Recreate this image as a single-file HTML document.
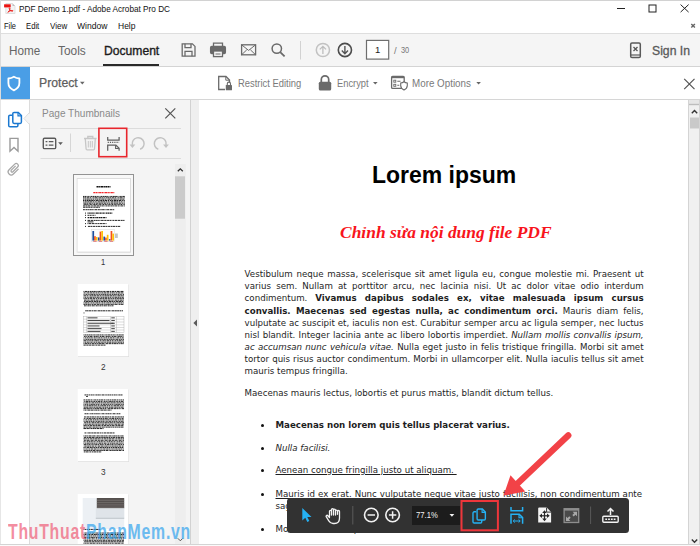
<!DOCTYPE html>
<html><head><meta charset="utf-8"><title>PDF Demo 1.pdf - Adobe Acrobat Pro DC</title>
<style>
*{box-sizing:border-box;margin:0;padding:0}
html,body{width:700px;height:546px;overflow:hidden;background:#fff}
body{position:relative;font-family:"Liberation Sans",sans-serif;color:#222}
.abs{position:absolute}
svg{position:absolute;overflow:visible}
.t{position:absolute;white-space:nowrap;transform-origin:0 50%;line-height:1}
#titlebar{left:0;top:0;width:700px;height:34px;background:#fff}
#tb1{left:0;top:33px;width:700px;height:34px;background:#f5f5f5;border-top:1px solid #dedede;border-bottom:1px solid #d4d4d4}
#tb2{left:0;top:67px;width:700px;height:33px;background:#fff;border-bottom:1px solid #d6d6d6}
#shield{left:0;top:67px;width:30px;height:32px;background:#4a9ee6}
#navstrip{left:0;top:100px;width:30px;height:446px;background:#fff;border-right:1px solid #dcdcdc;border-left:1px solid #e6e6e6}
#panel{left:30px;top:100px;width:160px;height:446px;background:#f4f4f4}
#divider{left:190px;top:100px;width:9px;height:446px;background:#efefef;border-left:1px solid #d2d2d2}
#docarea{left:199px;top:100px;width:490px;height:446px;background:#fff}
#vscroll{left:688px;top:100px;width:12px;height:446px;background:#f0f0f0;border-left:1px solid #d4d4d4;border-right:1px solid #d4d4d4}
.ui{color:#6e6e6e}
.doc{font-family:"DejaVu Sans",sans-serif;color:#1e1e1e;font-size:8.675px;line-height:12.1px}
</style></head><body>
<!-- title + menu -->
<div id="titlebar" class="abs"></div>
<svg style="left:0;top:0" width="20" height="17" viewBox="0 0 20 17"><path d="M5.800 3.500h6.700l2.500 2.500v7.500h-9.200z" fill="#f4f4f4" stroke="#d6d6d6" stroke-width=".7"/><path d="M12.500 3.500v2.500h2.500z" fill="#bdbdbd"/><rect x="4.100" y="4.300" width="6.600" height="3.100" fill="#ec1310"/><path d="M7.800 12.300c1.300-.8 2.200-2.400 2.200-3.900c0-.7-.9-.7-.8.200c.2 1.300 1.400 2.400 3.200 2.600c.8.100.8-.7 0-.7c-1.600 0-3.400.6-4.600 1.800z" fill="none" stroke="#ec1310" stroke-width=".9"/></svg>
<span class="t" id="t_title" style="left:18.800px;top:3.700px;font-size:9.600px;color:#111;transform:scaleX(0.8555)">PDF Demo 1.pdf - Adobe Acrobat Pro DC</span>
<span class="t" id="m1" style="left:4px;top:22px;font-size:9px;color:#111;transform:scaleX(0.8267)">File</span>
<span class="t" id="m2" style="left:26px;top:22px;font-size:9px;color:#111;transform:scaleX(0.8540)">Edit</span>
<span class="t" id="m3" style="left:49.500px;top:22px;font-size:9px;color:#111;transform:scaleX(0.8910)">View</span>
<span class="t" id="m4" style="left:77px;top:22px;font-size:9px;color:#111;transform:scaleX(0.9527)">Window</span>
<span class="t" id="m5" style="left:117.500px;top:22px;font-size:9px;color:#111;transform:scaleX(0.9451)">Help</span>
<!-- window controls -->
<svg style="left:610px;top:0" width="90" height="34" viewBox="0 0 90 34" fill="none" stroke="#222" stroke-width="1"><path d="M7 8.500h8"/><rect x="39" y="5" width="7" height="7"/><path d="M70.600 4.600l8 7.500M78.600 4.600l-8 7.500"/><path d="M81.300 24l3.600 3.600M84.900 24l-3.600 3.600" stroke="#666" stroke-width="1.400"/></svg>
<!-- toolbar 1 -->
<div id="tb1" class="abs"></div>
<span class="t ui" id="tab1" style="left:8.500px;top:45px;font-size:12px;color:#666;transform:scaleX(0.9761)">Home</span>
<span class="t ui" id="tab2" style="left:58px;top:45px;font-size:12px;color:#666;transform:scaleX(0.9905)">Tools</span>
<span class="t" id="tab3" style="left:103.500px;top:45px;font-size:12px;color:#1c1c1c;-webkit-text-stroke:.35px #1c1c1c;transform:scaleX(1.0100)">Document</span>
<div class="abs" style="left:103px;top:64px;width:56px;height:2px;background:#2a2a2a"></div>
<div id="tb1icons">
<svg style="left:0;top:34px" width="700" height="33" viewBox="0 34 700 33" fill="none" stroke="#6a6a6a" stroke-width="1.300">
<!-- save -->
<path d="M182.200 43.800h10.200l2.600 2.600v9.800h-12.800z"/><path d="M185 43.800v3.800h6v-3.800"/><path d="M185 56.200v-4.800h7v4.800"/>
<!-- print -->
<path d="M213.500 46.500v-3.400h9v3.400" /><rect x="210.600" y="46.500" width="14.800" height="7" rx="1.200" fill="#6a6a6a"/><rect x="213.500" y="51" width="9" height="5.600" fill="#f5f5f5"/><path d="M215.500 54h5" stroke-width="1"/>
<!-- mail -->
<rect x="241.600" y="44.800" width="14" height="10"/><path d="M241.600 44.800l7 5.600l7-5.600M241.600 54.800l5.200-5M255.600 54.800l-5.200-5" stroke-width="1"/>
<!-- search -->
<circle cx="276.800" cy="48.600" r="4.700" stroke-width="1.500"/><path d="M280.200 52.200l4.400 4.200" stroke-width="1.800"/>
<!-- sep -->
<path d="M300.500 41v18.500" stroke="#d2d2d2" stroke-width="1"/>
<!-- up/down -->
<circle cx="322.900" cy="50" r="6.600" stroke="#c2c2c2" stroke-width="1.500"/><path d="M322.900 54v-7.500M319.800 49.400l3.100-3.100l3.100 3.100" stroke="#bdbdbd" stroke-width="1.300"/>
<circle cx="344.900" cy="50" r="6.600" stroke="#4c4c4c" stroke-width="1.600"/><path d="M344.900 46v7.500M341.800 50.600l3.100 3.100l3.100-3.100" stroke="#555" stroke-width="1.400"/>
<!-- page box -->
<rect x="366.500" y="40.400" width="22.200" height="18.700" fill="#fff" stroke="#6e6e6e" stroke-width="1.200"/>
<!-- mobile -->
<rect x="630.700" y="42.900" width="9.600" height="14.600" rx="1.300" stroke="#5a5a5a" stroke-width="1.500"/><path d="M633.500 47l4 4M637.500 47l-4 4" stroke="#555" stroke-width="1.300"/><path d="M631 55h9" stroke="#5a5a5a" stroke-width="1.200"/>
</svg>
<span class="t" id="pgnum" style="left:375px;top:45px;font-size:9.500px;color:#222">1</span>
<span class="t ui" id="pgslash" style="left:394px;top:45.700px;font-size:9.500px;color:#777">/</span><span class="t ui" id="pgtot" style="left:401.300px;top:46px;font-size:9px;color:#777;transform:scaleX(.82)">30</span>
<span class="t" id="signin" style="left:652px;top:45px;font-size:12.200px;color:#5a5a5a;-webkit-text-stroke:.3px #5a5a5a;transform:scaleX(1.0012)">Sign In</span>
</div>
<!-- toolbar 2 -->
<div id="tb2" class="abs"></div>
<div id="shield" class="abs"></div>
<div id="tb2icons">
<svg style="left:0;top:67px" width="700" height="33" viewBox="0 67 700 33" fill="none" stroke="#6a6a6a" stroke-width="1.300">
<!-- shield -->
<path d="M13.900 76.700c-1.900 1.200-3.700 1.700-5.500 1.800v4.600c0 3.300 2.200 5.800 5.500 7.200c3.300-1.400 5.500-3.900 5.500-7.200v-4.600c-1.800-.1-3.600-.6-5.500-1.800z" stroke="#fff" stroke-width="1.800" stroke-linejoin="round"/>
<!-- protect arrow -->
<path d="M80 81.800h4.600l-2.300 2.600z" fill="#666" stroke="none"/>
<!-- restrict icon -->
<path d="M225 89.500h-6.300v-13h7.300l3.500 3.500v2.500"/><path d="M225.800 76.800v3.400h3.400" stroke-width="1"/><rect x="225.800" y="85" width="6.200" height="5.300" rx=".6" fill="#6a6a6a" stroke="none"/><path d="M227.300 85v-1.300a1.600 1.600 0 0 1 3.200 0v1.300" stroke-width="1.100"/>
<!-- lock -->
<rect x="318.800" y="81.800" width="12.400" height="8.700" rx="1.500" fill="#6a6a6a" stroke="none"/><path d="M321.300 82v-2.500a3.700 3.700 0 0 1 7.400 0v2.500" stroke-width="1.700"/>
<path d="M373 82h4.600l-2.300 2.600z" fill="#666" stroke="none"/>
<!-- more options icon -->
<rect x="391.600" y="76.400" width="12.600" height="12" rx="1" stroke-width="1.300"/><path d="M391.600 77.300h12.600" stroke-width="1.800"/>
<rect x="393.800" y="80.200" width="2" height="2" stroke-width=".9"/><rect x="393.800" y="84.300" width="2" height="2" stroke-width=".9"/><path d="M397.300 81.200h3.200M397.300 85.300h2" stroke-width="1.100"/>
<path d="M404 81.800c-1.100.8-2.200 1.100-3.300 1.200v2.600c0 2.100 1.300 3.600 3.300 4.500c2-.9 3.300-2.400 3.300-4.500v-2.600c-1.100-.1-2.200-.4-3.300-1.200z" fill="#fff" stroke-width="1.100"/>
<path d="M476.300 82h4.600l-2.300 2.600z" fill="#666" stroke="none"/>
<!-- close -->
<path d="M684.200 78.800l10.300 10.300M694.500 78.800l-10.300 10.300" stroke="#555" stroke-width="1.200"/>
</svg>
<span class="t" id="protect" style="left:38.500px;top:77px;font-size:12.200px;color:#5e5e5e;-webkit-text-stroke:.25px #5e5e5e;transform:scaleX(1.0032)">Protect</span>
<span class="t ui" id="restrict" style="left:237.500px;top:77.500px;font-size:10.600px;color:#7a7a7a;transform:scaleX(0.8870)">Restrict Editing</span>
<span class="t ui" id="encrypt" style="left:337px;top:77.500px;font-size:10.600px;color:#7a7a7a;transform:scaleX(0.8797)">Encrypt</span>
<span class="t ui" id="moreopt" style="left:412px;top:77.500px;font-size:10.600px;color:#7a7a7a;transform:scaleX(0.9262)">More Options</span>
</div>
<!-- left -->
<div id="navstrip" class="abs"></div>
<div id="panel" class="abs"></div>
<div id="divider" class="abs"></div>
<div id="docarea" class="abs"></div>
<div id="vscroll" class="abs"></div>
<div id="navicons">
<svg style="left:0;top:100px" width="200" height="446" viewBox="0 100 200 446" fill="none" stroke="#9a9a9a" stroke-width="1.300">
<!-- notch -->
<path d="M30.500 112.500l-6 6l6 6z" fill="#f4f4f4" stroke="none"/><path d="M29.500 112.500l-5.500 6l5.500 6" stroke="#dcdcdc" stroke-width="1"/>
<!-- pages icon (blue) -->
<path d="M12 115.300h-2a1.300 1.300 0 0 0-1.300 1.300v8.800a1.300 1.300 0 0 0 1.300 1.300h6.600a1.300 1.300 0 0 0 1.300-1.300v-1.600" stroke="#1b78d0" stroke-width="1.500"/>
<path d="M14.100 112.400h4.200l3.100 3.100v6.600a1.300 1.300 0 0 1-1.300 1.300h-6a1.300 1.300 0 0 1-1.300-1.300v-8.400a1.300 1.300 0 0 1 1.300-1.300z" stroke="#1b78d0" stroke-width="1.500"/><path d="M18 112.600v3.200h3.200" stroke="#1b78d0" stroke-width="1.200"/>
<!-- bookmark -->
<path d="M10 138.400h8v12.800l-4-3.800l-4 3.800z" stroke-width="1.400"/>
<!-- paperclip -->
<path d="M17.250 6V17.500A4.750 4.750 0 0 1 7.750 17.500V5A3.250 3.250 0 0 1 14.250 5V15.500A1.750 1.750 0 0 1 10.750 15.500V6" stroke="#a6a6a6" stroke-width="1.900" transform="translate(13.700,169.400) rotate(45) scale(0.640) translate(-12.500,-12)"/>
</svg>
</div>
<div id="panelcontent">
<span class="t" id="pthumb" style="left:41.500px;top:108px;font-size:11px;color:#8a8a8a;transform:scaleX(0.9133)">Page Thumbnails</span>
<svg style="left:30px;top:100px" width="170" height="446" viewBox="30 100 170 446" fill="none" stroke="#6a6a6a" stroke-width="1.300">
<!-- close -->
<path d="M165.300 108.300l10 10M175.300 108.300l-10 10" stroke="#555" stroke-width="1.200"/>
<!-- separators -->
<path d="M40.500 128.500h140.500M40.500 158.500h140.500" stroke="#dcdcdc" stroke-width="1"/>
<path d="M70.500 133.500v18.500" stroke="#d6d6d6" stroke-width="1"/>
<!-- options icon -->
<rect x="43.300" y="138.200" width="12.400" height="10.400" rx="1.200" stroke="#5a5a5a" stroke-width="1.400"/>
<path d="M45.600 141.600h1.800M45.600 145.200h1.800M48.800 141.600h4.600M48.800 145.200h4.600" stroke="#5a5a5a" stroke-width="1.300"/>
<path d="M58.200 142.300h4.600l-2.300 2.600z" fill="#5a5a5a" stroke="none"/>
<!-- trash (disabled) -->
<g stroke="#c6c6c6" stroke-width="1.300"><path d="M84 138.500h12.600M87.800 138.300v-1.800h5v1.800"/><path d="M85.300 138.800l.8 10.200a1 1 0 0 0 1 .9h6.400a1 1 0 0 0 1-.9l.8-10.200"/><path d="M88.300 141v6.500M90.300 141v6.500M92.300 141v6.500" stroke-width="1"/></g>
<!-- red highlight -->
<rect x="98.900" y="128.300" width="27.800" height="28.400" stroke="#e8262d" stroke-width="1.600"/>
<!-- insert page icon -->
<g stroke="#606060" stroke-width="1.250"><path d="M107.700 137v3h11.400v-3"/><path d="M107.700 142.300h11.400" stroke-dasharray="1.200 1" stroke-width="1.200"/><path d="M107.700 150.800v-5.800h8.200l3.200 3.200v2.600"/><path d="M115.600 145.300v3.200h3.300" stroke-width="1.100"/></g>
<!-- rotate ccw / cw (disabled) -->
<g stroke="#c2c2c2" stroke-width="1.500"><path d="M132.4 144.8A5.9 5.9 0 1 1 140.1 149.2"/><path d="M129.5 144.4h5.800l-2.900 3.600z" fill="#c2c2c2" stroke="none"/><path d="M166.0 144.8A5.9 5.9 0 1 0 158.3 149.2"/><path d="M163.1 144.4h5.800l-2.900 3.600z" fill="#c2c2c2" stroke="none"/></g>
<!-- thumb scrollbar -->
<rect x="175" y="164" width="10.800" height="380" fill="#eeeeee" stroke="none"/>
<rect x="175" y="176.300" width="10" height="42.400" fill="#cbcbcb" stroke="none"/>
<path d="M177.800 171.300l2.500-2.500l2.500 2.500" stroke="#333" stroke-width="1.300"/>
<path d="M177.800 538.300l2.500 2.500l2.500-2.500" stroke="#555" stroke-width="1"/>
<!-- divider arrow -->
<path d="M197 319.500v7l-3.600-3.500z" fill="#5a5a5a" stroke="none"/>
<!-- thumb 1 selection frame -->
<rect x="73.500" y="174.500" width="60" height="81" fill="#f8f8f8" stroke="#939393" stroke-width="1"/>
<rect x="77.200" y="178.500" width="53.300" height="73.600" fill="none" stroke="#dedede" stroke-width="1"/>
<!-- pages -->
<g stroke="none">
<rect x="78" y="179.500" width="52.500" height="73" fill="#dcdcdc"/><rect x="77.700" y="179" width="52.300" height="72.600" fill="#fff"/>
<rect x="78" y="284.500" width="51" height="72.500" fill="#dcdcdc"/><rect x="77.700" y="284" width="50.700" height="72.300" fill="#fff"/>
<rect x="78" y="389.500" width="51" height="72.500" fill="#dcdcdc"/><rect x="77.700" y="389" width="50.700" height="72.300" fill="#fff"/>
<rect x="78" y="494.500" width="51" height="52" fill="#dcdcdc"/><rect x="77.700" y="494" width="50.700" height="52" fill="#fff"/>
</g>
<g stroke="none">
<path d="M96.500 186.700h14" stroke="#111" stroke-width="1.500" stroke-dasharray="2.200 .4 1.400 .4"/>
<path d="M93.300 192.600h21" stroke="#f5272b" stroke-width="1.400" stroke-dasharray="2.200 .4 1.400 .4 1 .4"/>
<path d="M83.0 196.45h41.8" stroke="#1a1a1a" stroke-width=".95" stroke-dasharray="1.4 0.35 2.0 0.32 1.8 0.41 0.9 0.45 0.9 0.43 0.9 0.33" stroke-dashoffset="2.5"/>
<path d="M83.0 197.80h41.8" stroke="#1a1a1a" stroke-width=".95" stroke-dasharray="2.3 0.34 1.2 0.49 2.5 0.47 1.5 0.59 0.9 0.56 1.3 0.34" stroke-dashoffset="0.7"/>
<path d="M83.0 199.15h41.8" stroke="#1a1a1a" stroke-width=".95" stroke-dasharray="1.4 0.54 1.1 0.47 2.0 0.41 1.8 0.32 0.9 0.36 2.0 0.43" stroke-dashoffset="1.9"/>
<path d="M83.0 200.50h41.8" stroke="#1a1a1a" stroke-width=".95" stroke-dasharray="1.9 0.44 1.3 0.54 2.1 0.37 1.8 0.46 2.4 0.52 1.3 0.59" stroke-dashoffset="0.7"/>
<path d="M83.0 201.85h41.8" stroke="#1a1a1a" stroke-width=".95" stroke-dasharray="1.6 0.53 1.1 0.45 0.9 0.50 2.2 0.47 2.4 0.39 2.1 0.48" stroke-dashoffset="3.5"/>
<path d="M83.0 203.20h41.8" stroke="#1a1a1a" stroke-width=".95" stroke-dasharray="1.6 0.55 2.5 0.44 2.0 0.32 2.1 0.49 2.6 0.55 1.3 0.42" stroke-dashoffset="4.0"/>
<path d="M83.0 204.55h41.8" stroke="#1a1a1a" stroke-width=".95" stroke-dasharray="0.8 0.44 1.1 0.34 0.9 0.53 1.0 0.37 1.5 0.56 0.9 0.43" stroke-dashoffset="3.3"/>
<path d="M83.0 205.90h41.8" stroke="#1a1a1a" stroke-width=".95" stroke-dasharray="2.4 0.55 2.4 0.38 1.5 0.41 2.4 0.59 1.1 0.35 1.2 0.37" stroke-dashoffset="2.9"/>
<path d="M83.0 207.25h17.0" stroke="#1a1a1a" stroke-width=".95" stroke-dasharray="1.9 0.38 0.8 0.43 1.5 0.47 2.5 0.51 1.7 0.49 2.0 0.32" stroke-dashoffset="5.4"/>
<path d="M83 209.700h31.500" stroke="#1a1a1a" stroke-width=".95" stroke-dasharray="2.2 0.56 2.2 0.42 1.5 0.33 1.9 0.32 0.9 0.36 1.1 0.40" stroke-dashoffset="0.3"/>
<rect x="85" y="212.60" width="1" height="1" fill="#222"/><path d="M87.500 213.10h25" stroke="#1a1a1a" stroke-width="1.200" stroke-dasharray="0.8 0.35 1.0 0.41 0.8 0.56 1.9 0.34 1.3 0.40 1.5 0.34" stroke-dashoffset="5.1"/>
<rect x="85" y="214.80" width="1" height="1" fill="#222"/><path d="M87.500 215.30h8" stroke="#1a1a1a" stroke-width=".95" stroke-dasharray="2.6 0.44 1.7 0.33 1.0 0.40 1.3 0.55 1.1 0.31 2.5 0.46" stroke-dashoffset="0.9"/>
<rect x="85" y="217.10" width="1" height="1" fill="#222"/><path d="M87.500 217.60h19" stroke="#1a1a1a" stroke-width="1.200" stroke-dasharray="1.8 0.31 1.8 0.59 2.4 0.51 1.3 0.41 1.1 0.53 1.8 0.53" stroke-dashoffset="2.0"/>
<rect x="85" y="219.90" width="1" height="1" fill="#222"/><path d="M87.500 220.40h37" stroke="#1a1a1a" stroke-width=".95" stroke-dasharray="1.2 0.54 2.6 0.56 2.3 0.55 2.1 0.37 1.7 0.41 0.9 0.31" stroke-dashoffset="1.7"/><path d="M87.500 221.90h6" stroke="#1a1a1a" stroke-width=".9"/>
<rect x="85" y="223.10" width="1" height="1" fill="#222"/><path d="M87.500 223.60h19" stroke="#1a1a1a" stroke-width=".95" stroke-dasharray="1.3 0.51 2.5 0.43 2.5 0.60 2.5 0.41 1.2 0.37 1.2 0.36" stroke-dashoffset="3.7"/>
<rect x="85" y="225.90" width="1" height="1" fill="#222"/><path d="M87.500 226.40h33" stroke="#1a1a1a" stroke-width=".95" stroke-dasharray="2.4 0.55 1.7 0.50 2.2 0.33 2.0 0.57 2.2 0.53 1.7 0.35" stroke-dashoffset="4.7"/>
<rect x="91.300" y="229.300" width="23" height="12.200" fill="#fdfdfd" stroke="#d0d0d0" stroke-width=".4"/>
<rect x="92.40" y="231.00" width="1.700" height="9.60" fill="#1f4e9c"/><rect x="94.10" y="236.20" width="1.700" height="4.40" fill="#f4511e"/><rect x="95.80" y="237.00" width="1.700" height="3.60" fill="#ffc107"/><rect x="93.20" y="241.100" width="3.400" height="0.700" fill="#d66"/><rect x="97.90" y="237.40" width="1.700" height="3.20" fill="#1f4e9c"/><rect x="99.60" y="231.60" width="1.700" height="9.00" fill="#f4511e"/><rect x="101.30" y="231.00" width="1.700" height="9.60" fill="#ffc107"/><rect x="98.70" y="241.100" width="3.400" height="0.700" fill="#d66"/><rect x="103.40" y="236.60" width="1.700" height="4.00" fill="#1f4e9c"/><rect x="105.10" y="237.60" width="1.700" height="3.00" fill="#f4511e"/><rect x="106.80" y="234.80" width="1.700" height="5.80" fill="#ffc107"/><rect x="104.20" y="241.100" width="3.400" height="0.700" fill="#d66"/><rect x="108.90" y="239.20" width="1.700" height="1.40" fill="#1f4e9c"/><rect x="110.60" y="231.00" width="1.700" height="9.60" fill="#f4511e"/><rect x="112.30" y="233.60" width="1.700" height="7.00" fill="#ffc107"/><rect x="109.70" y="241.100" width="3.400" height="0.700" fill="#d66"/>
<rect x="115" y="233.500" width="2.800" height="4.500" fill="#c4c4c4"/>
<path d="M83.5 291.45h40.5" stroke="#1a1a1a" stroke-width=".95" stroke-dasharray="1.4 0.54 2.5 0.42 1.5 0.58 2.1 0.35 1.0 0.35 2.4 0.54" stroke-dashoffset="0.9"/>
<path d="M83.5 292.90h40.5" stroke="#1a1a1a" stroke-width=".95" stroke-dasharray="2.3 0.59 2.0 0.41 1.8 0.34 0.8 0.59 2.0 0.46 2.5 0.43" stroke-dashoffset="5.2"/>
<path d="M83.5 294.35h40.5" stroke="#1a1a1a" stroke-width=".95" stroke-dasharray="2.3 0.36 1.3 0.39 1.2 0.48 1.3 0.43 1.0 0.57 1.4 0.44" stroke-dashoffset="3.5"/>
<path d="M83.5 295.80h40.5" stroke="#1a1a1a" stroke-width=".95" stroke-dasharray="2.4 0.43 2.5 0.45 1.8 0.46 0.8 0.43 1.1 0.30 2.2 0.35" stroke-dashoffset="2.8"/>
<path d="M83.5 297.25h40.5" stroke="#1a1a1a" stroke-width=".95" stroke-dasharray="2.1 0.47 1.4 0.46 1.8 0.54 1.0 0.47 1.2 0.38 2.2 0.45" stroke-dashoffset="3.4"/>
<path d="M83.5 298.70h40.5" stroke="#1a1a1a" stroke-width=".95" stroke-dasharray="2.2 0.57 1.6 0.48 1.7 0.45 2.0 0.44 1.8 0.44 2.5 0.51" stroke-dashoffset="5.3"/>
<path d="M83.5 300.15h40.5" stroke="#1a1a1a" stroke-width=".95" stroke-dasharray="2.5 0.38 1.8 0.58 2.3 0.34 1.0 0.43 0.9 0.37 0.9 0.50" stroke-dashoffset="4.7"/>
<path d="M83.5 301.45h40.5" stroke="#1a1a1a" stroke-width=".95" stroke-dasharray="2.4 0.35 2.1 0.50 1.1 0.56 2.5 0.37 2.5 0.42 1.7 0.60" stroke-dashoffset="5.0"/>
<path d="M83.5 302.90h40.5" stroke="#1a1a1a" stroke-width=".95" stroke-dasharray="1.1 0.43 1.7 0.40 1.2 0.40 2.1 0.31 1.8 0.43 0.8 0.40" stroke-dashoffset="3.7"/>
<path d="M83.5 304.35h40.5" stroke="#1a1a1a" stroke-width=".95" stroke-dasharray="1.7 0.32 2.6 0.54 2.5 0.33 1.3 0.31 2.2 0.38 1.0 0.43" stroke-dashoffset="5.5"/>
<path d="M83.5 305.80h30.0" stroke="#1a1a1a" stroke-width=".95" stroke-dasharray="2.3 0.38 1.1 0.58 1.8 0.51 1.0 0.32 2.0 0.43 0.9 0.58" stroke-dashoffset="3.8"/>
<path d="M85 310.800h38" stroke="#1a1a1a" stroke-width=".95" stroke-dasharray="2.2 0.33 2.3 0.32 2.4 0.44 1.4 0.47 2.5 0.38 1.0 0.46" stroke-dashoffset="1.4"/><rect x="83.500" y="312.500" width="1" height="0.900" fill="#333"/>
<g fill="none" stroke="#999" stroke-width=".35"><rect x="83.500" y="316.500" width="40.500" height="16"/><path d="M83.500 319.200h40.500M83.500 322h40.500M83.500 324.800h40.500M83.500 327.500h40.500M83.500 330h40.500M86.500 316.500v16M110.500 316.500v16M116.500 316.500v16"/></g>
<rect x="87.500" y="317.40" width="10" height="0.900" fill="#333"/><rect x="111.300" y="317.40" width="3.500" height="0.900" fill="#333"/>
<rect x="87.500" y="320.10" width="22" height="0.900" fill="#333"/><rect x="111.300" y="320.10" width="3.500" height="0.900" fill="#333"/>
<rect x="87.500" y="322.80" width="26" height="0.900" fill="#333"/><rect x="111.300" y="322.80" width="3.500" height="0.900" fill="#333"/>
<rect x="87.500" y="325.50" width="12" height="0.900" fill="#333"/><rect x="111.300" y="325.50" width="3.500" height="0.900" fill="#333"/>
<rect x="87.500" y="328.20" width="14" height="0.900" fill="#333"/><rect x="111.300" y="328.20" width="3.500" height="0.900" fill="#333"/>
<rect x="87.500" y="330.90" width="13" height="0.900" fill="#333"/><rect x="111.300" y="330.90" width="3.500" height="0.900" fill="#333"/>
<path d="M83.5 334.95h40.5" stroke="#1a1a1a" stroke-width=".95" stroke-dasharray="1.0 0.35 0.9 0.36 1.4 0.39 2.2 0.39 1.7 0.35 1.4 0.31" stroke-dashoffset="1.5"/>
<path d="M83.5 336.40h40.5" stroke="#1a1a1a" stroke-width=".95" stroke-dasharray="0.8 0.52 1.8 0.36 1.7 0.58 1.0 0.55 1.6 0.45 2.3 0.42" stroke-dashoffset="3.0"/>
<path d="M83.5 337.85h40.5" stroke="#1a1a1a" stroke-width=".95" stroke-dasharray="2.0 0.59 1.4 0.55 2.1 0.49 1.5 0.40 0.9 0.34 0.9 0.52" stroke-dashoffset="1.5"/>
<path d="M83.5 339.30h40.5" stroke="#1a1a1a" stroke-width=".95" stroke-dasharray="1.1 0.33 2.3 0.56 2.0 0.38 1.2 0.39 1.6 0.35 1.6 0.38" stroke-dashoffset="5.8"/>
<path d="M83.5 340.75h40.5" stroke="#1a1a1a" stroke-width=".95" stroke-dasharray="2.6 0.46 1.2 0.59 1.4 0.41 0.8 0.41 1.7 0.45 1.2 0.45" stroke-dashoffset="0.0"/>
<path d="M83.5 342.20h40.5" stroke="#1a1a1a" stroke-width=".95" stroke-dasharray="1.3 0.33 1.5 0.31 0.8 0.39 1.2 0.48 1.8 0.53 2.0 0.51" stroke-dashoffset="5.3"/>
<path d="M83.5 343.65h40.5" stroke="#1a1a1a" stroke-width=".95" stroke-dasharray="1.5 0.40 2.6 0.34 2.1 0.49 0.9 0.55 2.4 0.49 2.1 0.54" stroke-dashoffset="0.8"/>
<path d="M83.5 345.10h22.0" stroke="#1a1a1a" stroke-width=".95" stroke-dasharray="1.7 0.45 2.3 0.54 2.3 0.48 2.4 0.50 2.0 0.37 0.9 0.34" stroke-dashoffset="2.2"/>
<path d="M84.5 394.95h38.0" stroke="#1a1a1a" stroke-width=".95" stroke-dasharray="1.6 0.31 1.9 0.45 1.2 0.53 2.2 0.44 1.1 0.44 1.0 0.34"/><rect x="86" y="396" width="2" height="0.900" fill="#333"/>
<path d="M83.5 399.95h40.5" stroke="#1a1a1a" stroke-width=".95" stroke-dasharray="1.0 0.55 1.8 0.49 1.9 0.50 1.7 0.30 2.2 0.52 1.7 0.46" stroke-dashoffset="4.0"/>
<path d="M83.5 401.40h40.5" stroke="#1a1a1a" stroke-width=".95" stroke-dasharray="0.9 0.52 1.3 0.32 1.3 0.52 1.2 0.52 2.6 0.45 1.5 0.44" stroke-dashoffset="4.1"/>
<path d="M83.5 402.85h40.5" stroke="#1a1a1a" stroke-width=".95" stroke-dasharray="2.2 0.49 2.0 0.32 1.1 0.38 2.1 0.39 1.8 0.30 0.9 0.38" stroke-dashoffset="4.0"/>
<path d="M83.5 404.30h40.5" stroke="#1a1a1a" stroke-width=".95" stroke-dasharray="2.0 0.50 1.3 0.45 1.6 0.44 1.0 0.57 1.2 0.59 2.5 0.31" stroke-dashoffset="2.8"/>
<path d="M83.5 405.75h40.5" stroke="#1a1a1a" stroke-width=".95" stroke-dasharray="2.3 0.59 1.6 0.38 1.2 0.58 1.2 0.47 1.1 0.46 2.5 0.34" stroke-dashoffset="4.9"/>
<path d="M83.5 407.20h40.5" stroke="#1a1a1a" stroke-width=".95" stroke-dasharray="1.7 0.57 2.1 0.37 2.4 0.45 0.8 0.30 1.7 0.44 1.3 0.34" stroke-dashoffset="2.1"/>
<path d="M83.5 408.65h40.5" stroke="#1a1a1a" stroke-width=".95" stroke-dasharray="1.4 0.55 0.8 0.53 2.3 0.34 2.5 0.51 2.4 0.39 1.5 0.42" stroke-dashoffset="6.0"/>
<path d="M83.5 410.10h28.0" stroke="#1a1a1a" stroke-width=".95" stroke-dasharray="1.9 0.41 1.6 0.38 0.9 0.33 2.3 0.39 2.5 0.37 1.3 0.45" stroke-dashoffset="1.1"/>
<path d="M84.5 413.75h36.0" stroke="#1a1a1a" stroke-width=".95" stroke-dasharray="1.6 0.33 1.6 0.45 0.9 0.49 0.9 0.52 2.2 0.45 0.9 0.45"/>
<path d="M83.5 416.95h40.5" stroke="#1a1a1a" stroke-width=".95" stroke-dasharray="1.5 0.59 2.4 0.54 1.9 0.57 2.5 0.46 2.1 0.31 2.1 0.44" stroke-dashoffset="4.5"/>
<path d="M83.5 418.40h40.5" stroke="#1a1a1a" stroke-width=".95" stroke-dasharray="2.0 0.39 0.9 0.58 1.0 0.44 1.4 0.39 2.1 0.59 1.3 0.50" stroke-dashoffset="1.8"/>
<path d="M83.5 419.85h40.5" stroke="#1a1a1a" stroke-width=".95" stroke-dasharray="1.8 0.42 1.1 0.35 1.2 0.57 1.7 0.37 2.4 0.60 1.6 0.34" stroke-dashoffset="1.2"/>
<path d="M83.5 421.30h40.5" stroke="#1a1a1a" stroke-width=".95" stroke-dasharray="1.0 0.40 1.0 0.37 1.3 0.47 2.4 0.52 1.5 0.42 1.7 0.41" stroke-dashoffset="2.0"/>
<path d="M83.5 422.75h40.5" stroke="#1a1a1a" stroke-width=".95" stroke-dasharray="0.9 0.38 2.5 0.34 1.7 0.49 2.4 0.36 1.3 0.37 1.5 0.43" stroke-dashoffset="5.7"/>
<path d="M83.5 424.20h40.5" stroke="#1a1a1a" stroke-width=".95" stroke-dasharray="2.3 0.56 0.8 0.31 2.1 0.57 1.7 0.48 0.8 0.42 2.5 0.55" stroke-dashoffset="5.1"/>
<path d="M83.5 425.65h40.5" stroke="#1a1a1a" stroke-width=".95" stroke-dasharray="2.6 0.37 1.0 0.35 1.7 0.50 2.5 0.52 2.0 0.53 1.6 0.47" stroke-dashoffset="0.2"/>
<path d="M83.5 427.10h40.5" stroke="#1a1a1a" stroke-width=".95" stroke-dasharray="2.2 0.37 2.5 0.49 1.3 0.34 1.3 0.49 2.1 0.33 0.9 0.46" stroke-dashoffset="3.5"/>
<path d="M83.5 428.55h20.0" stroke="#1a1a1a" stroke-width=".95" stroke-dasharray="1.5 0.37 1.9 0.30 1.3 0.44 2.5 0.49 2.4 0.44 1.2 0.37" stroke-dashoffset="5.8"/>
<path d="M84.5 432.95h30.0" stroke="#1a1a1a" stroke-width=".95" stroke-dasharray="1.5 0.59 1.0 0.56 2.6 0.52 2.3 0.36 2.6 0.45 2.5 0.57"/>
<path d="M83.5 435.95h40.5" stroke="#1a1a1a" stroke-width=".95" stroke-dasharray="2.1 0.39 0.8 0.45 2.0 0.43 1.3 0.50 2.5 0.37 0.9 0.40" stroke-dashoffset="2.5"/>
<path d="M83.5 437.40h40.5" stroke="#1a1a1a" stroke-width=".95" stroke-dasharray="2.0 0.36 2.2 0.52 1.7 0.36 2.5 0.39 2.3 0.37 1.2 0.53" stroke-dashoffset="1.8"/>
<path d="M83.5 438.85h40.5" stroke="#1a1a1a" stroke-width=".95" stroke-dasharray="2.5 0.45 1.1 0.37 1.6 0.50 2.5 0.34 1.5 0.36 2.6 0.34" stroke-dashoffset="0.3"/>
<path d="M83.5 440.30h40.5" stroke="#1a1a1a" stroke-width=".95" stroke-dasharray="0.9 0.42 2.4 0.57 2.1 0.60 2.5 0.40 1.1 0.58 2.1 0.31" stroke-dashoffset="4.0"/>
<path d="M83.5 441.75h40.5" stroke="#1a1a1a" stroke-width=".95" stroke-dasharray="1.5 0.41 1.4 0.35 0.8 0.38 1.4 0.59 1.0 0.59 1.2 0.41" stroke-dashoffset="4.9"/>
<path d="M83.5 443.20h40.5" stroke="#1a1a1a" stroke-width=".95" stroke-dasharray="2.3 0.43 0.9 0.44 1.5 0.58 1.1 0.41 2.4 0.31 1.5 0.54" stroke-dashoffset="4.6"/>
<path d="M83.5 444.65h40.5" stroke="#1a1a1a" stroke-width=".95" stroke-dasharray="0.9 0.31 0.9 0.58 1.3 0.52 2.4 0.40 1.3 0.59 1.9 0.38" stroke-dashoffset="4.3"/>
<path d="M83.5 446.10h40.5" stroke="#1a1a1a" stroke-width=".95" stroke-dasharray="1.4 0.38 0.8 0.53 2.4 0.49 2.5 0.31 1.2 0.44 2.5 0.59" stroke-dashoffset="2.3"/>
<path d="M83.5 447.55h40.5" stroke="#1a1a1a" stroke-width=".95" stroke-dasharray="1.3 0.43 1.7 0.58 1.1 0.54 2.1 0.55 2.2 0.48 1.4 0.40" stroke-dashoffset="2.2"/>
<path d="M83.5 449.00h40.5" stroke="#1a1a1a" stroke-width=".95" stroke-dasharray="2.2 0.32 1.2 0.53 1.2 0.32 0.9 0.47 1.4 0.59 2.4 0.60" stroke-dashoffset="1.6"/>
<path d="M83.5 450.45h40.5" stroke="#1a1a1a" stroke-width=".95" stroke-dasharray="1.0 0.33 1.7 0.51 1.6 0.37 1.6 0.49 2.0 0.52 2.3 0.50" stroke-dashoffset="0.7"/>
<path d="M83.5 451.90h18.0" stroke="#1a1a1a" stroke-width=".95" stroke-dasharray="2.3 0.39 1.8 0.41 2.1 0.36 1.2 0.37 1.1 0.57 1.8 0.40" stroke-dashoffset="2.4"/>
<rect x="82.700" y="498" width="41.500" height="31" fill="#ecf0f4"/>
<rect x="96.800" y="498" width="27.400" height="10.400" fill="#55504e"/>
<path d="M96.800 500.300h27.400M96.800 502.600h27.400M96.800 504.900h27.400M96.800 507.200h27.400" stroke="#8a8684" stroke-width=".5"/>
<rect x="95.800" y="508.400" width="28.400" height="10" fill="#dfe4e9"/><rect x="95.800" y="517.800" width="28.400" height="0.900" fill="#b9c0c7"/>
<path d="M83.5 529.45h17.0" stroke="#1a1a1a" stroke-width=".95" stroke-dasharray="2.6 0.45 1.2 0.54 2.0 0.60 1.0 0.44 2.3 0.55 2.4 0.31" stroke-dashoffset="1.8"/>
<path d="M83.5 533.05h40.5" stroke="#1a1a1a" stroke-width=".95" stroke-dasharray="1.0 0.36 2.6 0.47 2.5 0.41 2.4 0.43 1.3 0.53 2.5 0.33" stroke-dashoffset="3.6"/>
<path d="M83.5 534.50h40.5" stroke="#1a1a1a" stroke-width=".95" stroke-dasharray="1.9 0.37 1.5 0.34 1.2 0.38 1.9 0.50 1.2 0.30 1.4 0.50" stroke-dashoffset="1.1"/>
<path d="M83.5 535.95h40.5" stroke="#1a1a1a" stroke-width=".95" stroke-dasharray="1.4 0.36 2.2 0.46 0.9 0.33 1.5 0.47 2.0 0.33 1.1 0.51" stroke-dashoffset="2.5"/>
<path d="M83.5 537.40h40.5" stroke="#1a1a1a" stroke-width=".95" stroke-dasharray="1.3 0.39 2.5 0.39 1.8 0.41 1.5 0.56 2.6 0.41 1.2 0.52" stroke-dashoffset="1.2"/>
<path d="M83.5 538.85h40.5" stroke="#1a1a1a" stroke-width=".95" stroke-dasharray="0.8 0.57 1.6 0.55 1.5 0.56 1.6 0.35 0.8 0.47 2.0 0.57" stroke-dashoffset="0.5"/>
<path d="M83.5 540.30h40.5" stroke="#1a1a1a" stroke-width=".95" stroke-dasharray="1.9 0.41 1.7 0.34 1.3 0.46 2.5 0.33 1.7 0.54 2.5 0.36" stroke-dashoffset="0.8"/>
<path d="M83.5 541.75h40.5" stroke="#1a1a1a" stroke-width=".95" stroke-dasharray="2.5 0.59 1.7 0.32 2.5 0.42 2.4 0.49 2.3 0.35 2.2 0.37" stroke-dashoffset="2.4"/>
<path d="M83.5 543.20h40.5" stroke="#1a1a1a" stroke-width=".95" stroke-dasharray="2.3 0.55 1.1 0.37 1.5 0.46 1.5 0.34 1.2 0.52 2.4 0.31" stroke-dashoffset="3.4"/>
<path d="M83.5 544.65h40.5" stroke="#1a1a1a" stroke-width=".95" stroke-dasharray="2.2 0.31 2.3 0.34 1.9 0.47 1.9 0.39 1.6 0.47 1.6 0.50" stroke-dashoffset="2.7"/>
</g>
</svg>
<span class="t" id="n1" style="left:101px;top:257px;font-size:9.500px;color:#333;transform:scaleX(0.7929)">1</span>
<span class="t" id="n2" style="left:101px;top:362px;font-size:9.500px;color:#333;transform:scaleX(0.8684)">2</span>
<span class="t" id="n3" style="left:101px;top:466.500px;font-size:9.500px;color:#333;transform:scaleX(0.8684)">3</span>
</div>
<div id="doccontent">
<div class="t" id="doc_title" style="left:372px;top:164px;font:bold 23px 'Liberation Sans',sans-serif;color:#000;line-height:1;transform:scaleX(0.9985)">Lorem ipsum</div>
<div class="t" id="doc_sub" style="left:339.500px;top:224px;font:italic bold 17.450px 'Liberation Serif',serif;color:#f8141c;line-height:1;transform:scaleX(1.0003)">Chỉnh sửa nội dung file PDF</div>
<div class="abs doc" id="p1" style="left:244.600px;top:268.300px;width:399px;text-align:justify">Vestibulum neque massa, scelerisque sit amet ligula eu, congue molestie mi. Praesent ut varius sem. Nullam at porttitor arcu, nec lacinia nisi. Ut ac dolor vitae odio interdum condimentum. <b>Vivamus dapibus sodales ex, vitae malesuada ipsum cursus convallis. Maecenas sed egestas nulla, ac condimentum orci.</b> Mauris diam felis, vulputate ac suscipit et, iaculis non est. Curabitur semper arcu ac ligula semper, nec luctus nisl blandit. Integer lacinia ante ac libero lobortis imperdiet. <i>Nullam mollis convallis ipsum, ac accumsan nunc vehicula vitae.</i> Nulla eget justo in felis tristique fringilla. Morbi sit amet tortor quis risus auctor condimentum. Morbi in ullamcorper elit. Nulla iaculis tellus sit amet mauris tempus fringilla.</div>
<div class="abs doc" id="p2" style="left:244.600px;top:386.500px;width:399px">Maecenas mauris lectus, lobortis et purus mattis, blandit dictum tellus.</div>
<div class="abs doc" id="b1" style="left:275.500px;top:418.500px;width:369px"><b>Maecenas non lorem quis tellus placerat varius.</b></div>
<div class="abs doc" id="b2" style="left:275.500px;top:442px;width:369px"><i>Nulla facilisi.</i></div>
<div class="abs doc" id="b3" style="left:275.500px;top:463.500px;width:369px;white-space:pre"><u>Aenean congue fringilla justo ut aliquam. </u></div>
<div class="abs doc" id="b4" style="left:275.500px;top:488.100px;width:366.600px;text-align:justify"><u>Mauris id ex erat.</u> Nunc vulputate neque vitae justo facilisis, non condimentum ante sagittis.</div>
<div class="abs doc" id="b5" style="left:275.500px;top:522.600px;width:369px">Morbi viverra semper lorem nec molestie.</div>
<div class="abs" style="left:261px;top:423.500px;width:3.400px;height:3.400px;border-radius:50%;background:#111"></div>
<div class="abs" style="left:261px;top:447px;width:3.400px;height:3.400px;border-radius:50%;background:#111"></div>
<div class="abs" style="left:261px;top:468.500px;width:3.400px;height:3.400px;border-radius:50%;background:#111"></div>
<div class="abs" style="left:261px;top:493.100px;width:3.400px;height:3.400px;border-radius:50%;background:#111"></div>
<div class="abs" style="left:261px;top:527.600px;width:3.400px;height:3.400px;border-radius:50%;background:#111"></div>
</div>
<div id="floatbar">
<div class="abs" style="left:287.200px;top:497.600px;width:341.500px;height:35.300px;background:#323232;border-radius:3.500px"></div>
<div class="abs" style="left:411.500px;top:506px;width:48.500px;height:18.500px;background:#1c1c1c"></div>
<span class="t" id="zoomv" style="left:416.300px;top:509.500px;font-size:9.400px;color:#f2f2f2;transform:scaleX(0.8197)">77.1%</span>
<svg style="left:287px;top:498px" width="342" height="35" viewBox="287 498 342 35" fill="none" stroke="#f2f2f2" stroke-width="1.300">
<!-- cursor arrow -->
<path d="M302.300 508v12.600l3-2.800l2 4.200l2-.9l-2-4.100h4.200z" fill="#25b1f3" stroke="none"/>
<!-- hand -->
<path d="M329.500 516.500v-5.200a1 1 0 0 1 2 0v-1.600a1 1 0 0 1 2 0v.4a1 1 0 0 1 2 0v1a1 1 0 0 1 2 0v3.200M337.500 511.500a1 1 0 0 1 2 0v6.500c0 3.500-2 5.500-5 5.500h-1.500c-2 0-3.200-1-4.200-2.600l-2.600-4.200c-.6-1 .8-2 1.700-1l1.600 1.800M331.500 511v4M333.500 510v5M335.500 511v4" stroke-width="1.300" stroke-linejoin="round" stroke-linecap="round"/>
<!-- sep -->
<path d="M352.800 506v18.500M590.600 506.500v17.500" stroke="#5a5a5a" stroke-width="1"/>
<!-- zoom out / in -->
<circle cx="371.300" cy="515" r="6.800" stroke-width="1.600"/><path d="M367.600 515h7.400" stroke-width="1.500"/>
<circle cx="392.600" cy="515" r="6.800" stroke-width="1.600"/><path d="M388.900 515h7.400M392.600 511.300v7.400" stroke-width="1.500"/>
<path d="M449.500 514h4.800l-2.400 2.800z" fill="#f2f2f2" stroke="none"/>
<!-- red highlight -->
<rect x="461.500" y="501" width="36.400" height="29.300" stroke="#ee363b" stroke-width="2"/>
<!-- pages icon blue -->
<g stroke="#25b1f3" stroke-width="1.500" transform="translate(479.500 0) scale(.93 1) translate(-479.500 0)"><path d="M476 511.800h-2.200a1.300 1.300 0 0 0-1.300 1.300v8.600a1.300 1.300 0 0 0 1.300 1.300h6.800a1.300 1.300 0 0 0 1.300-1.300v-1.700"/><path d="M478.200 508.900h4.400l3.200 3.200v6.700a1.300 1.300 0 0 1-1.300 1.300h-6.300a1.300 1.300 0 0 1-1.300-1.300v-8.600a1.300 1.300 0 0 1 1.300-1.300z"/><path d="M482.300 509.100v3.300h3.300" stroke-width="1.200"/></g>
<!-- scroll/fit width icon blue -->
<g stroke="#25b1f3" stroke-width="1.500"><path d="M511 507v3.800h11.600v-3.800"/><path d="M511 523.800v-9.600h8.200l3.400 3.400v6.200"/><path d="M519 514.400v3.400h3.400" stroke-width="1.100"/><path d="M513.300 521h6.800M514.800 519.500l-1.600 1.500l1.600 1.500M518.600 519.500l1.600 1.500l-1.600 1.500" stroke-width="1"/></g>
<!-- fit page icon -->
<path d="M539.200 507.600h7.600l4.300 4.300v10.600h-12.900v-13.900a1 1 0 0 1 1-1z" fill="#f4f4f4" stroke="none"/><path d="M546.600 507.600v4.500h4.500" stroke="#323232" stroke-width="1"/>
<g fill="#262626" stroke="none"><path d="M544.500 510.300l2.300 2.700h-4.600zM544.500 521.300l2.300-2.700h-4.600zM539.300 515.800l2.700-2.300v4.600zM549.700 515.800l-2.700-2.300v4.600z"/><rect x="543.900" y="512.500" width="1.200" height="6.600"/><rect x="541.500" y="515.200" width="6" height="1.200"/></g>
<!-- full screen icon gray -->
<rect x="564.100" y="508.700" width="14.600" height="13.800" fill="#4a4a4a" stroke="#8e8e8e" stroke-width="1.300"/><path d="M564 509.600h14.800" stroke="#8e8e8e" stroke-width="2"/>
<g fill="#a8a8a8" stroke="none"><path d="M572.600 511.800h4.400v4.400l-1.500-1.500l-1.800 1.800l-1.400-1.400l1.800-1.800z"/><path d="M570.400 521h-4.400v-4.400l1.500 1.500l1.800-1.800l1.400 1.400l-1.800 1.800z"/></g>
<!-- upload icon -->
<rect x="602.800" y="516.200" width="15.400" height="6" rx="1" stroke-width="1.400"/><path d="M605.300 519.200h10.400" stroke-width="1.600" stroke-dasharray="1.800 1"/><path d="M610.500 515v-6M607.500 511.500l3-3l3 3" stroke-width="1.500"/>
</svg>
</div>
<div id="overlay">
<div class="abs" style="left:0;top:0;width:700px;height:1px;background:#d2d2d2"></div><div class="abs" style="left:0;top:0;width:1px;height:100px;background:#dcdcdc"></div>
<svg style="left:0;top:0" width="700" height="546" viewBox="0 0 700 546" fill="none">
<!-- red arrow -->
<path d="M568.300 435.400L517 484" stroke="#f24247" stroke-width="6.300" stroke-linecap="round"/>
<path d="M503.500 495.600l7-20.400l14.800 16.400z" fill="#f24247"/>
<!-- doc scrollbar -->
<rect x="689" y="100" width="10" height="5" fill="#e6e6e6"/><path d="M689 104.500h10" stroke="#bdbdbd" stroke-width="1.400"/>
<rect x="690" y="117.500" width="9" height="11" fill="#c9c9c9"/>
<path d="M691.800 113.300l2.700-2.700l2.700 2.700" stroke="#333" stroke-width="1.400"/>
<path d="M691.800 539.600l2.700 2.700l2.700-2.700" stroke="#333" stroke-width="1.400"/>
<rect x="0" y="544" width="700" height="2" fill="#fbfbfb"/><path d="M0 544.500h700" stroke="#d4d4d4" stroke-width="1"/>
</svg>
<div class="t" id="wm" style="left:8px;top:519.800px;font:bold 21.500px 'Liberation Sans',sans-serif;letter-spacing:1px;transform:scaleX(0.7362)"><span style="color:#ee5470;opacity:.66">ThuThuat</span><span style="color:#38a6ee;opacity:.72">PhanMem</span><span style="color:#38a6ee;opacity:.72">.vn</span></div>
</div>
</body></html>
